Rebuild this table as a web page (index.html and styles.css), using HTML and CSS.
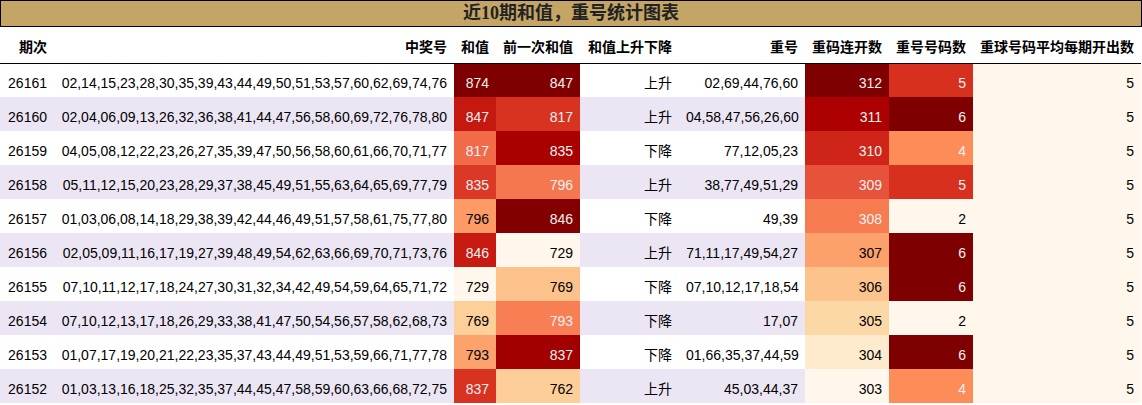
FILE: index.html
```html
<!DOCTYPE html>
<html lang="zh">
<head>
<meta charset="utf-8">
<title>近10期和值，重号统计图表</title>
<link rel="stylesheet" href="styles.css">
</head>
<body>
<div class="title">近10期和值，重号统计图表</div>
<table class="stats">
  <colgroup>
    <col class="c-issue"><col class="c-nums"><col class="c-sum"><col class="c-prev"><col class="c-trend"><col class="c-rep"><col class="c-streak"><col class="c-count"><col class="c-avg">
  </colgroup>
  <thead>
    <tr><th>期次</th><th>中奖号</th><th>和值</th><th>前一次和值</th><th>和值上升下降</th><th>重号</th><th>重码连开数</th><th>重号号码数</th><th>重球号码平均每期开出数</th></tr>
  </thead>
  <tbody>
    <tr><td>26161</td><td>02,14,15,23,28,30,35,39,43,44,49,50,51,53,57,60,62,69,74,76</td><td style="background:#7f0000;color:#f1f1f1">874</td><td style="background:#7f0000;color:#f1f1f1">847</td><td>上升</td><td>02,69,44,76,60</td><td style="background:#7f0000;color:#f1f1f1">312</td><td style="background:#d7301f;color:#f1f1f1">5</td><td class="flat">5</td></tr>
    <tr><td>26160</td><td>02,04,06,09,13,26,32,36,38,41,44,47,56,58,60,69,72,76,78,80</td><td style="background:#c5180f;color:#f1f1f1">847</td><td style="background:#d83220;color:#f1f1f1">817</td><td>上升</td><td>04,58,47,56,26,60</td><td style="background:#ad0000;color:#f1f1f1">311</td><td style="background:#7f0000;color:#f1f1f1">6</td><td class="flat">5</td></tr>
    <tr><td>26159</td><td>04,05,08,12,22,23,26,27,35,39,47,50,56,58,60,61,66,70,71,77</td><td style="background:#f16b4b;color:#f1f1f1">817</td><td style="background:#a90000;color:#f1f1f1">835</td><td>下降</td><td>77,12,05,23</td><td style="background:#cf2518;color:#f1f1f1">310</td><td style="background:#fc8d59;color:#f1f1f1">4</td><td class="flat">5</td></tr>
    <tr><td>26158</td><td>05,11,12,15,20,23,28,29,37,38,45,49,51,55,63,64,65,69,77,79</td><td style="background:#db3825;color:#f1f1f1">835</td><td style="background:#f57750;color:#f1f1f1">796</td><td>上升</td><td>38,77,49,51,29</td><td style="background:#e7533a;color:#f1f1f1">309</td><td style="background:#d7301f;color:#f1f1f1">5</td><td class="flat">5</td></tr>
    <tr><td>26157</td><td>01,03,06,08,14,18,29,38,39,42,44,46,49,51,57,58,61,75,77,80</td><td style="background:#fc9b66;color:#000">796</td><td style="background:#830000;color:#f1f1f1">846</td><td>下降</td><td>49,39</td><td style="background:#f67b51;color:#f1f1f1">308</td><td style="background:#fff7ec;color:#000">2</td><td class="flat">5</td></tr>
    <tr><td>26156</td><td>02,05,09,11,16,17,19,27,39,48,49,54,62,63,66,69,70,71,73,76</td><td style="background:#c71a11;color:#f1f1f1">846</td><td style="background:#fff7ec;color:#000">729</td><td>上升</td><td>71,11,17,49,54,27</td><td style="background:#fca16c;color:#000">307</td><td style="background:#7f0000;color:#f1f1f1">6</td><td class="flat">5</td></tr>
    <tr><td>26155</td><td>07,10,11,12,17,18,24,27,30,31,32,34,42,49,54,59,64,65,71,72</td><td style="background:#fff7ec;color:#000">729</td><td style="background:#fdc28c;color:#000">769</td><td>下降</td><td>07,10,12,17,18,54</td><td style="background:#fdc38d;color:#000">306</td><td style="background:#7f0000;color:#f1f1f1">6</td><td class="flat">5</td></tr>
    <tr><td>26154</td><td>07,10,12,13,17,18,26,29,33,38,41,47,50,54,56,57,58,62,68,73</td><td style="background:#fdcf99;color:#000">769</td><td style="background:#f87f53;color:#f1f1f1">793</td><td>下降</td><td>17,07</td><td style="background:#fdd8a7;color:#000">305</td><td style="background:#fff7ec;color:#000">2</td><td class="flat">5</td></tr>
    <tr><td>26153</td><td>01,07,17,19,20,21,22,23,35,37,43,44,49,51,53,59,66,71,77,78</td><td style="background:#fca36d;color:#000">793</td><td style="background:#a20000;color:#f1f1f1">837</td><td>下降</td><td>01,66,35,37,44,59</td><td style="background:#feeacc;color:#000">304</td><td style="background:#7f0000;color:#f1f1f1">6</td><td class="flat">5</td></tr>
    <tr><td>26152</td><td>01,03,13,16,18,25,32,35,37,44,45,47,58,59,60,63,66,68,72,75</td><td style="background:#d83221;color:#f1f1f1">837</td><td style="background:#fdce98;color:#000">762</td><td>上升</td><td>45,03,44,37</td><td style="background:#fff7ec;color:#000">303</td><td style="background:#fc8d59;color:#f1f1f1">4</td><td class="flat">5</td></tr>
  </tbody>
</table>
</body>
</html>
```
FILE: styles.css
```css
html, body {
  margin: 0;
  padding: 0;
  background: #ffffff;
}
body {
  font-family: "Liberation Sans", "Noto Sans CJK SC", sans-serif;
  font-size: 14px;
  color: #000;
}
.title {
  width: 1142px;
  height: 27px;
  box-sizing: border-box;
  border: 1px solid #000;
  background: #c4a565;
  color: #222;
  font-family: "Liberation Serif", "Noto Sans CJK SC", serif;
  font-weight: bold;
  font-size: 18px;
  line-height: 25px;
  text-align: center;
}
.stats {
  width: 1141px;
  table-layout: fixed;
  border-collapse: collapse;
  border-spacing: 0;
}
.c-issue { width: 54px; }
.c-nums { width: 400px; }
.c-sum { width: 42px; }
.c-prev { width: 84px; }
.c-trend { width: 99px; }
.c-rep { width: 126px; }
.c-streak { width: 84px; }
.c-count { width: 84px; }
.c-avg { width: 168px; }
.stats th,
.stats td {
  text-align: right;
  vertical-align: middle;
  white-space: nowrap;
  line-height: 16px;
  box-sizing: border-box;
}
.stats th {
  height: 36px;
  padding: 4px 7px 0;
  font-weight: bold;
  border-bottom: 1px solid #000;
}
.stats td {
  height: 34px;
  padding: 5px 7px 0;
}
.stats tbody tr:nth-child(even) td {
  background: #ece6f4;
}
.stats td.flat,
.stats tbody tr:nth-child(even) td.flat {
  background: #fff7ec;
}
```
